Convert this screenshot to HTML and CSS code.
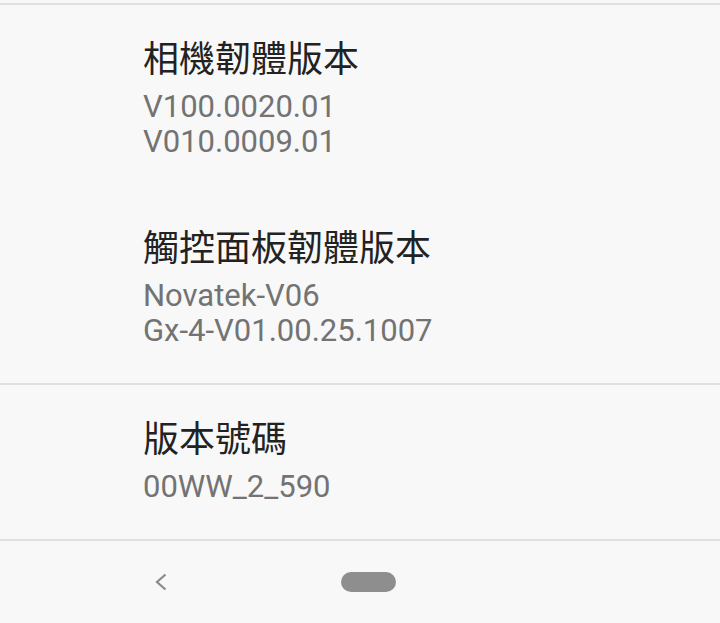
FILE: index.html
```html
<!DOCTYPE html>
<html lang="zh-TW">
<head>
  <meta charset="UTF-8" />
  <meta name="viewport" content="width=device-width, initial-scale=1" />
  <title>軟體資訊</title>
  <link rel="stylesheet" href="styles.css">
</head>
<body>

  <div class="top-gap"></div>
  <div class="divider"></div>

  <div class="item">
    <div class="item-title">相機韌體版本</div>
    <div class="item-summary">V100.0020.01<br>V010.0009.01</div>
  </div>

  <div class="item">
    <div class="item-title">觸控面板韌體版本</div>
    <div class="item-summary">Novatek-V06<br>Gx-4-V01.00.25.1007</div>
  </div>

  <div class="divider"></div>

  <div class="item">
    <div class="item-title">版本號碼</div>
    <div class="item-summary">00WW_2_590</div>
  </div>

  <div class="divider"></div>

  <div class="nav-bar">
    <svg class="nav-back" width="12" height="18" viewBox="0 0 12 18">
      <polyline points="10.5,1.5 2,9 10.5,16.5" fill="none" stroke="#8a8a8a" stroke-width="2.2" />
    </svg>
    <div class="nav-home"></div>
  </div>

</body>
</html>
```

FILE: styles.css
```css
* { box-sizing: border-box; }

body {
  margin: 0;
  padding: 0;
  overflow: hidden;
  height: 100vh;
  font-family: Roboto, 'Noto Sans CJK TC', sans-serif;
  background-color: #f8f8f8;
  display: flex;
  flex-direction: column;
}

.top-gap {
  height: 3px;
}

.divider {
  height: 2px;
  background-color: #e0e0e0;
}

.item {
  padding: 32px 0 35px 143px;
}

.item-title {
  font-size: 36px;
  line-height: 46px;
  color: #222;
}

.item-summary {
  margin-top: 6px;
  font-size: 31px;
  line-height: 35px;
  color: #737373;
}

.nav-bar {
  flex: 1;
  display: flex;
  align-items: center;
  gap: 174px;
  padding-left: 155px;
}

.nav-back {
  display: block;
}

.nav-home {
  width: 55px;
  height: 20px;
  border-radius: 10px;
  background-color: #8e8e8e;
}
```
